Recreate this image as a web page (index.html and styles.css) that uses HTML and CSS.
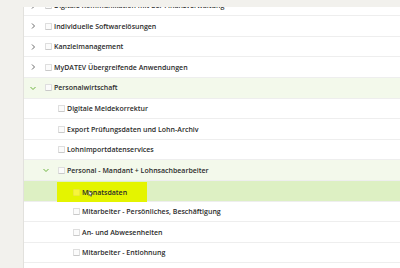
FILE: index.html
```html
<!DOCTYPE html>
<html>
<head>
    <meta charset="UTF-8">
    <title>Programme</title>
    <link rel="stylesheet" href="styles.css">
</head>
<body>
    <div class="panel">
        <ul class="tree">
            <li class="row lvl1">
                <span class="chev"><svg viewBox="0 0 6 6"><polyline points="2,0.5 4.5,3 2,5.5"/></svg></span>
                <span class="box"></span>
                <span class="label">Digitale Kommunikation mit der Finanzverwaltung</span>
            </li>
            <li class="row lvl1">
                <span class="chev"><svg viewBox="0 0 6 6"><polyline points="2,0.5 4.5,3 2,5.5"/></svg></span>
                <span class="box"></span>
                <span class="label">Individuelle Softwarelösungen</span>
            </li>
            <li class="row lvl1">
                <span class="chev"><svg viewBox="0 0 6 6"><polyline points="2,0.5 4.5,3 2,5.5"/></svg></span>
                <span class="box"></span>
                <span class="label">Kanzleimanagement</span>
            </li>
            <li class="row lvl1">
                <span class="chev"><svg viewBox="0 0 6 6"><polyline points="2,0.5 4.5,3 2,5.5"/></svg></span>
                <span class="box"></span>
                <span class="label">MyDATEV Übergreifende Anwendungen</span>
            </li>
            <li class="row lvl1 open">
                <span class="chev"><svg viewBox="0 0 6 6"><polyline points="0.5,2 3,4.5 5.5,2"/></svg></span>
                <span class="box"></span>
                <span class="label">Personalwirtschaft</span>
            </li>
            <li class="row lvl2">
                <span class="chev"></span>
                <span class="box"></span>
                <span class="label">Digitale Meldekorrektur</span>
            </li>
            <li class="row lvl2">
                <span class="chev"></span>
                <span class="box"></span>
                <span class="label">Export Prüfungsdaten und Lohn-Archiv</span>
            </li>
            <li class="row lvl2">
                <span class="chev"></span>
                <span class="box"></span>
                <span class="label">Lohnimportdatenservices</span>
            </li>
            <li class="row lvl2 open">
                <span class="chev"><svg viewBox="0 0 6 6"><polyline points="0.5,2 3,4.5 5.5,2"/></svg></span>
                <span class="box"></span>
                <span class="label">Personal - Mandant + Lohnsachbearbeiter</span>
            </li>
            <li class="row lvl3 selected">
                <span class="chev"></span>
                <span class="hl">
                    <span class="box"></span>
                    <span class="label">Monatsdaten</span>
                    <svg class="cursor" viewBox="0 0 6 8"><path d="M1 0.5 L1 6.5 L2.4 5.2 L3.4 7.5 L4.4 7 L3.4 4.8 L5.3 4.8 Z"/></svg>
                </span>
            </li>
            <li class="row lvl3">
                <span class="chev"></span>
                <span class="box"></span>
                <span class="label">Mitarbeiter - Persönliches, Beschäftigung</span>
            </li>
            <li class="row lvl3">
                <span class="chev"></span>
                <span class="box"></span>
                <span class="label">An- und Abwesenheiten</span>
            </li>
            <li class="row lvl3">
                <span class="chev"></span>
                <span class="box"></span>
                <span class="label">Mitarbeiter - Entlohnung</span>
            </li>
        </ul>
    </div>
</body>
</html>
```

FILE: styles.css
```css
:root {
    --frame: #f2f1ed;
    --frame-line: #e2e1dd;
    --text: #2b2b2b;
    --line: #eeeeee;
    --open: #f3f9eb;
    --selected: #ddf0c3;
    --highlight: #e4f400;
    --chev: #5a5a5a;
    --chev-open: #6cb33f;
}

html, body {
    margin: 0;
    padding: 0;
    height: 100%;
}

body {
    font-family: 'Open Sans', 'Noto Sans', sans-serif;
    background: var(--frame);
    color: var(--text);
    overflow: hidden;
}

.panel {
    margin: 7px 0 0 23px;
    height: calc(100% - 7px);
    background: #ffffff;
    border-left: 1px solid var(--frame-line);
    overflow: hidden;
}

.tree {
    list-style: none;
    margin: -11.3px 0 0 0;
    padding: 0;
}

.row {
    display: flex;
    align-items: center;
    box-sizing: border-box;
    height: 20.6px;
    border-bottom: 1px solid var(--line);
    font-size: 7px;
    font-weight: 600;
    white-space: nowrap;
}

.row.open {
    background: var(--open);
}

.row.selected {
    background: var(--selected);
}

.lvl1 { padding-left: 6px; }
.lvl2 { padding-left: 19px; }
.lvl3 { padding-left: 34px; }

.chev {
    width: 6px;
    height: 6px;
    margin-right: 9px;
    display: flex;
    flex-shrink: 0;
}

.chev svg {
    width: 6px;
    height: 6px;
    fill: none;
    stroke: var(--chev);
    stroke-width: 0.9;
}

.open .chev svg {
    stroke: var(--chev-open);
    stroke-width: 1;
}

.box {
    width: 7px;
    height: 7px;
    box-sizing: border-box;
    border: 1px solid #dedede;
    border-bottom-color: #c9c9c9;
    border-radius: 1px;
    background: #fbfbfb;
    margin-right: 2px;
    flex-shrink: 0;
}

.hl {
    position: relative;
    display: flex;
    align-items: center;
    box-sizing: border-box;
    width: 90px;
    height: 20px;
    margin: 3px 0 0 -16px;
    padding-left: 16px;
    background: var(--highlight);
}

.hl .box {
    background: #f7f53c;
    border-color: #ecea3a;
}

.cursor {
    position: absolute;
    left: 31px;
    top: 8px;
    width: 5px;
    height: 7px;
    fill: #ffffff;
    stroke: #222222;
    stroke-width: 0.7;
}
```
